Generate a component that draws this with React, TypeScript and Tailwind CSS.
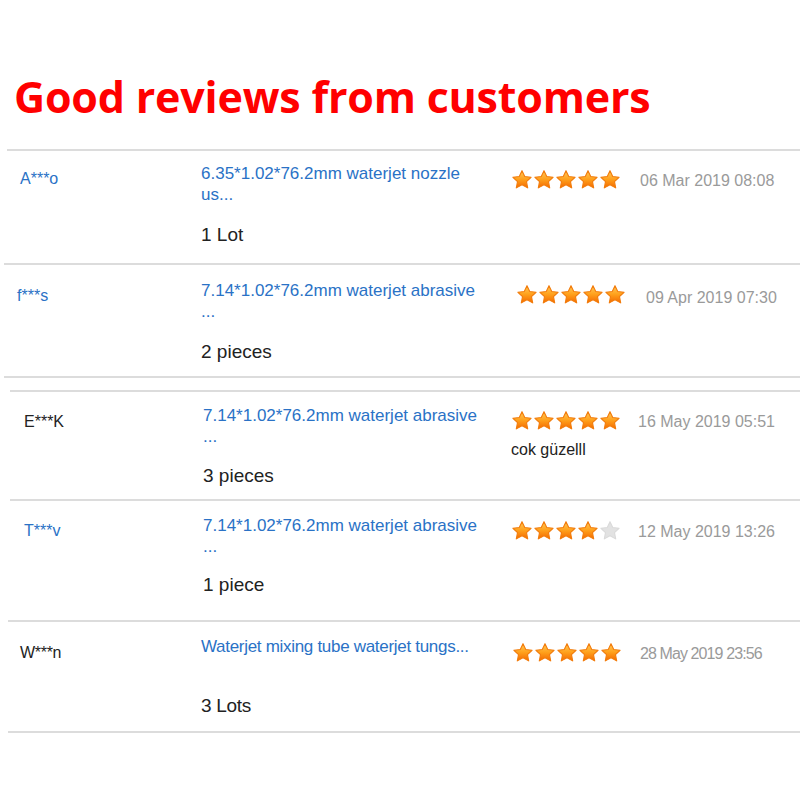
import React from "react";

const STAR = "M12 1.8l3 6.3 6.9.9-5 4.8 1.3 6.8L12 17.3l-6.2 3.3 1.3-6.8-5-4.8 6.9-.9z";

function Star({ on, id }: { on: boolean; id: string }) {
  return (
    <svg width="22" height="22" viewBox="0 0 24 24" className="shrink-0">
      <defs>
        <linearGradient id={id} x1="0" y1="0" x2="0" y2="1">
          <stop offset="0" stopColor="#ffc95a" />
          <stop offset="0.5" stopColor="#ffa11c" />
          <stop offset="1" stopColor="#f46a00" />
        </linearGradient>
      </defs>
      <path
        d={STAR}
        fill={on ? `url(#${id})` : "#e2e2e2"}
        stroke={on ? "#f27c0c" : "#dadada"}
        strokeWidth="1.2"
        strokeLinejoin="round"
      />
    </svg>
  );
}

function Stars({ count, k }: { count: number; k: string }) {
  return (
    <div className="flex">
      {[0, 1, 2, 3, 4].map((i) => (
        <Star key={i} on={i < count} id={`g-${k}-${i}`} />
      ))}
    </div>
  );
}

type Review = {
  key: string;
  row: string;
  name: string;
  nameCls: string;
  product: string[];
  prodCls: string;
  qty: string;
  qtyCls: string;
  stars: number;
  starCls: string;
  note?: string;
  date: string;
  dateCls: string;
};

const reviews: Review[] = [
  {
    key: "a",
    row: "ml-[7px] h-[114px] border-t-2",
    name: "A***o",
    nameCls: "w-[194px] pl-[13px] pt-[18px] text-[#2a72c6]",
    product: ["6.35*1.02*76.2mm waterjet nozzle", "us..."],
    prodCls: "w-[310px] pt-[12px]",
    qty: "1 Lot",
    qtyCls: "mt-[18px]",
    stars: 5,
    starCls: "w-[129px] pt-[18px]",
    date: "06 Mar 2019 08:08",
    dateCls: "pt-[20px]",
  },
  {
    key: "b",
    row: "ml-[4px] h-[115px] border-t-2 border-b-2",
    name: "f***s",
    nameCls: "w-[197px] pl-[13px] pt-[21px] text-[#2a72c6]",
    product: ["7.14*1.02*76.2mm waterjet abrasive", "..."],
    prodCls: "w-[315px] pt-[15px]",
    qty: "2 pieces",
    qtyCls: "mt-[18px]",
    stars: 5,
    starCls: "w-[130px] pt-[19px]",
    date: "09 Apr 2019 07:30",
    dateCls: "pt-[23px]",
  },
  {
    key: "c",
    row: "ml-[10px] mt-[12px] h-[109px] border-t-2",
    name: "E***K",
    nameCls: "w-[193px] pl-[14px] pt-[20px] text-[#222]",
    product: ["7.14*1.02*76.2mm waterjet abrasive", "..."],
    prodCls: "w-[308px] pt-[13px]",
    qty: "3 pieces",
    qtyCls: "mt-[17px]",
    stars: 5,
    starCls: "w-[127px] pt-[18px]",
    note: "cok güzelll",
    date: "16 May 2019 05:51",
    dateCls: "pt-[20px]",
  },
  {
    key: "d",
    row: "ml-[10px] h-[121px] border-t-2",
    name: "T***v",
    nameCls: "w-[193px] pl-[14px] pt-[20px] text-[#2a72c6]",
    product: ["7.14*1.02*76.2mm waterjet abrasive", "..."],
    prodCls: "w-[308px] pt-[14px]",
    qty: "1 piece",
    qtyCls: "mt-[16px]",
    stars: 4,
    starCls: "w-[127px] pt-[19px]",
    date: "12 May 2019 13:26",
    dateCls: "pt-[21px]",
  },
  {
    key: "e",
    row: "ml-[8px] h-[113px] border-t-2 border-b-2 tracking-[-0.3px]",
    name: "W***n",
    nameCls: "w-[193px] pl-[12px] pt-[21px] text-[#222]",
    product: ["Waterjet mixing tube waterjet tungs..."],
    prodCls: "w-[311px] pt-[14px]",
    qty: "3 Lots",
    qtyCls: "mt-[37px]",
    stars: 5,
    starCls: "w-[128px] pt-[20px]",
    date: "28 May 2019 23:56",
    dateCls: "pt-[22px] tracking-[-0.9px]",
  },
];

export default function App() {
  return (
    <div className="w-[800px] h-[800px] bg-white overflow-hidden font-['Liberation_Sans',Arial,sans-serif]">
      <div className="h-[149px] pt-[75px] pl-[14px]">
        <h1 className="font-['Open_Sans',sans-serif] font-bold text-[43px] leading-none text-[#ff0000] tracking-[-0.2px]">
          Good reviews from customers
        </h1>
      </div>

      {reviews.map((r) => (
        <div key={r.key} className={`flex border-[#dcdcdc] box-border ${r.row}`}>
          <div className={`text-[16px] leading-[20px] ${r.nameCls}`}>{r.name}</div>
          <div className={r.prodCls}>
            <div className="text-[17px] leading-[21px] text-[#2a72c6]">
              {r.product.map((line, i) => (
                <div key={i}>{line}</div>
              ))}
            </div>
            <div className={`text-[19px] leading-[24px] text-[#222] ${r.qtyCls}`}>{r.qty}</div>
          </div>
          <div className={r.starCls}>
            <Stars count={r.stars} k={r.key} />
            {r.note && <div className="mt-[8px] text-[16px] leading-[20px] text-[#222]">{r.note}</div>}
          </div>
          <div className={`text-[16px] leading-[20px] text-[#9a9a9a] whitespace-nowrap ${r.dateCls}`}>{r.date}</div>
        </div>
      ))}
    </div>
  );
}
